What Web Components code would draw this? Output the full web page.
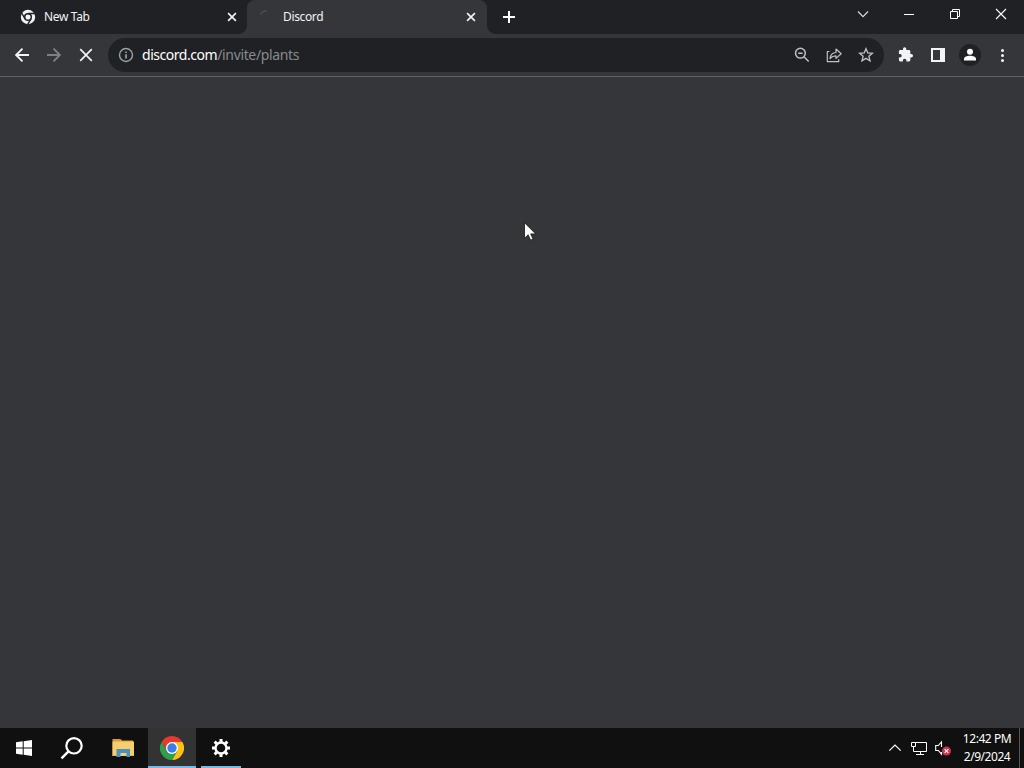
<!DOCTYPE html>
<html lang="en">
<head>
<meta charset="utf-8">
<title>Discord</title>
<style>
  html, body {
    margin: 0;
    height: 100%;
    overflow: hidden;
    background: #35363a;
    font-family: "Noto Sans", "Open Sans", sans-serif;
  }
</style>
</head>
<body>
<desktop-screen></desktop-screen>

<script>
const icons = {
  chromeMono: `<circle cx="8" cy="8" r="7.2" fill="#f1f3f4"/><circle cx="8" cy="8" r="3.3" fill="none" stroke="#202124" stroke-width="1.5"/><path d="M8 4.5h6.8M5 9.8 1.7 4M11 9.8 7.7 15.3" stroke="#202124" stroke-width="1.4"/>`,
  spinner: `<path d="M1.7 5.5a6.5 6.5 0 0 1 6-3.7" fill="none" stroke="#414c58" stroke-width="1.8"/>`,
  tabClose: `<path d="m4.1 4.1 7.8 7.8m0-7.8-7.8 7.8" stroke="#f1f3f4" stroke-width="1.6"/>`,
  plus: `<path d="M8 2v12M2 8h12" stroke="#fff" stroke-width="2"/>`,
  chevron: `<path d="m3 5.5 5 5.2 5-5.2" fill="none" stroke="#dedfe0" stroke-width="1.1"/>`,
  minimize: `<path d="M3 8.5h10" stroke="#fff"/>`,
  restore: `<path d="M3.5 5.5h7v7h-7zM5.5 5.5v-2h7v7h-2" fill="none" stroke="#fff"/>`,
  windowClose: `<path d="m3 3 10 10m0-10L3 13" stroke="#fff" stroke-width="1.1"/>`,
  back: `<path d="M15 8H2m6.5-6.4L2.1 8l6.4 6.4" fill="none" stroke="#f1f3f4" stroke-width="1.9"/>`,
  forward: `<path d="M1 8h13M7.5 1.6 13.9 8l-6.4 6.4" fill="none" stroke="#7e8083" stroke-width="1.9"/>`,
  stop: `<path d="m2.2 2.2 11.6 11.6m0-11.6L2.2 13.8" stroke="#f1f3f4" stroke-width="1.7"/>`,
  info: `<circle cx="8" cy="8" r="6.5" fill="none" stroke="#9aa0a6" stroke-width="1.4"/><path d="M8 7.2v4.2M8 4.5v1.6" stroke="#9aa0a6" stroke-width="1.7"/>`,
  zoomOut: `<circle cx="6.4" cy="6.2" r="4.9" fill="none" stroke="#bdc1c6" stroke-width="1.5"/><path d="m9.9 9.7 4.8 4.8M4.2 6.2h4.4" stroke="#bdc1c6" stroke-width="1.5"/>`,
  share: `<path d="M3.5 4.5H1.3v10.2h11.4v-2.5M4 11.5c.5-4 2.600-5.900 6-6V2l5.200 4.700L10 11.400V8.800c-2.800 0-4.500.9-6 2.700z" fill="none" stroke="#bdc1c6" stroke-width="1.2" stroke-linejoin="round"/>`,
  star: `<path d="m8 1.7 1.8 4.2 4.6.4-3.5 3 1.1 4.5L8 11.4l-4 2.4 1.1-4.5-3.5-3 4.6-.4z" fill="none" stroke="#bdc1c6" stroke-width="1.35"/>`,
  puzzle: `<path transform="translate(-.4 -.3) scale(.67)" d="M20.5 11H19V7c0-1.1-.9-2-2-2h-4V3.5a2.5 2.5 0 0 0-5 0V5H4c-1.1 0-2 .9-2 2v3.8h1.5a2.7 2.7 0 0 1 0 5.4H2V20c0 1.1.9 2 2 2h3.8v-1.5a2.7 2.7 0 0 1 5.4 0V22H17c1.1 0 2-.9 2-2v-4h1.5a2.5 2.5 0 0 0 0-5z" fill="#f1f3f4"/>`,
  sidePanel: `<path d="M1 1h14v14H1zM3 3v10h7V3z" fill="#f1f3f4" fill-rule="evenodd"/>`,
  profile: `<circle cx="12" cy="12" r="11" fill="#202124"/><circle cx="12" cy="8.8" r="3" fill="#fff"/><path d="M6 17.5V16c0-2 3-3.2 6-3.2s6 1.2 6 3.2v1.5z" fill="#fff"/>`,
  more: `<circle cx="8.5" cy="3.5" r="1.5" fill="#f1f3f4"/><circle cx="8.5" cy="8.5" r="1.5" fill="#f1f3f4"/><circle cx="8.5" cy="13.5" r="1.5" fill="#f1f3f4"/>`,
  windows: `<path d="m0 2.3 6.7-1v6.2H0zM7.7 1.2 16 0v7.5H7.7zM0 8.5h6.7v6.2L0 13.8zM7.7 8.5H16V16l-8.3-1.2z" fill="#fff"/>`,
  search: `<circle cx="14" cy="9.8" r="7.7" fill="none" stroke="#fff" stroke-width="2.2"/><path d="m8.5 15.3-7 7" stroke="#fff" stroke-width="2.4"/>`,
  folder: `<path d="M1.5 4V3h8L11 4.5h11V19H1.5z" fill="#d89b35"/><path d="M1.5 5.500H23V20H1.500z" fill="#f6cf6d"/><path d="M5.500 13H19v8h-3.500v-4h-6v4h-4z" fill="#4a91c2"/><path d="M1.500 19h4v1h-4zM19 19h4v1h-4z" fill="#e6b34d"/>`,
  chrome: `<path d="M12 0A12 12 0 0 1 22.4 6H12L6.8 15 1.6 6A12 12 0 0 1 12 0z" fill="#e33b2e"/><path d="M12 6h10.4A12 12 0 0 1 12 24l5.2-9z" fill="#fbc116"/><path d="m17.2 15-5.2 9A12 12 0 0 1 1.6 6l5.2 9 5.2 3z" fill="#2da04d"/><circle cx="12" cy="12" r="6" fill="#fff"/><circle cx="12" cy="12" r="4.7" fill="#3b7de9"/>`,
  gear: `<g stroke="#fff" fill="none"><circle cx="10" cy="10" r="5.5" stroke-width="2.4"/><path d="M10 1v3M10 16v3M1 10h3M16 10h3M3.640 3.640l2.100 2.100M14.260 14.260l2.100 2.100M3.640 16.360l2.100-2.100M14.260 5.740l2.100-2.100" stroke-width="3"/></g>`,
  caretUp: `<path d="m2.3 10.7 5.7-5.7 5.7 5.7" fill="none" stroke="#fff" stroke-width="1.2"/>`,
  network: `<path d="M4.5 2.5h11v9h-13v-5M9.500 11.500v3M5 14.500h8M.5 2.500h4v4h-4z" fill="none" stroke="#fff"/>`,
  muted: `<path d="M6.500 7V2L3.300 5.500H.7v5h2.600l3.200 3.700V12" fill="none" stroke="#fff" stroke-width="1.1"/><circle cx="11.500" cy="11" r="4.500" fill="#c9364a"/><path d="m9.700 9.200 3.600 3.600m0-3.600-3.600 3.600" stroke="#fff" stroke-width="1.2"/>`,
  cursor: `<path d="M.5.7v15.500l3.700-3.400 2.400 5.400 2.400-1.100-2.300-5.200h5z" fill="#fff" stroke="#151515" stroke-width=".8"/>`
};

// box of the drawing for the icons that are not on the 16px grid
const boxes = {
  profile: [24, 24],
  search: [24, 24],
  folder: [24, 24],
  chrome: [24, 24],
  gear: [20, 20],
  cursor: [13, 20]
};

class UiIcon extends HTMLElement {
  constructor() {
    super();
    this.attachShadow({ mode: 'open' });
  }

  connectedCallback() {
    const name = this.getAttribute('name');
    const [w, h] = boxes[name] || [16, 16];
    this.shadowRoot.innerHTML = `
      <style>
        :host { display: inline-flex; flex: none; align-items: center; justify-content: center; }
        svg { display: block; }
      </style>
      <svg width="${w}" height="${h}" viewBox="0 0 ${w} ${h}">${icons[name]}</svg>
    `;
  }
}
customElements.define('ui-icon', UiIcon);

// attach a shadow root with fixed markup
function defineElement(name, html) {
  const template = document.createElement('template');
  template.innerHTML = html;
  customElements.define(name, class extends HTMLElement {
    constructor() {
      super();
      this.attachShadow({ mode: 'open' }).appendChild(template.content.cloneNode(true));
    }
  });
}

defineElement('browser-tab', `
  <style>
    :host {
      display: flex;
      align-items: center;
      box-sizing: border-box;
      width: 239px;
      height: 34px;
      padding: 0 7px 0 12px;
      font-size: 12px;
      letter-spacing: -0.35px;
      color: #f1f3f4;
    }
    :host([active]) {
      position: relative;
      width: 240px;
      padding-right: 8px;
      border-radius: 8px 8px 0 0;
      background: #35363a;
    }
    :host([active])::before,
    :host([active])::after {
      content: "";
      position: absolute;
      bottom: 0;
      width: 8px;
      height: 8px;
    }
    :host([active])::before {
      left: -8px;
      background: radial-gradient(circle at 0 0, transparent 7.5px, #35363a 8px);
    }
    :host([active])::after {
      right: -8px;
      background: radial-gradient(circle at 100% 0, transparent 7.5px, #35363a 8px);
    }
    .title { flex: 1; margin-left: 8px; padding-bottom: 1px; white-space: nowrap; }
  </style>
  <slot name="icon"></slot>
  <span class="title"><slot></slot></span>
  <ui-icon name="tabClose"></ui-icon>
`);

defineElement('tab-strip', `
  <style>
    :host { display: flex; height: 34px; padding-left: 8px; background: #202124; }
    .new { width: 44px; }
    .controls { display: flex; height: 28px; margin-left: auto; }
    .controls ui-icon { width: 46px; }
  </style>
  <slot></slot>
  <ui-icon class="new" name="plus"></ui-icon>
  <div class="controls">
    <ui-icon name="chevron"></ui-icon>
    <ui-icon name="minimize"></ui-icon>
    <ui-icon name="restore"></ui-icon>
    <ui-icon name="windowClose"></ui-icon>
  </div>
`);

defineElement('address-bar', `
  <style>
    :host {
      display: flex;
      flex: 1;
      align-items: center;
      height: 34px;
      padding: 0 2px 0 10px;
      border-radius: 17px;
      background: #202124;
      color: #888b8f;
      font-size: 14px;
      letter-spacing: -0.35px;
    }
    .url { flex: 1; margin-left: 8px; padding-bottom: 1px; white-space: nowrap; }
    .action { width: 32px; }
  </style>
  <ui-icon name="info"></ui-icon>
  <span class="url"><slot></slot></span>
  <ui-icon class="action" name="zoomOut"></ui-icon>
  <ui-icon class="action" name="share"></ui-icon>
  <ui-icon class="action" name="star"></ui-icon>
`);

defineElement('browser-toolbar', `
  <style>
    :host {
      display: flex;
      align-items: center;
      box-sizing: border-box;
      height: 43px;
      padding: 0 6px;
      border-bottom: 1px solid #606164;
      background: #35363a;
    }
    ui-icon { width: 32px; }
    address-bar { margin: 0 6px; }
    ::slotted(b) { font-weight: 400; letter-spacing: -0.46px; color: #fff; }
  </style>
  <ui-icon name="back"></ui-icon>
  <ui-icon name="forward"></ui-icon>
  <ui-icon name="stop"></ui-icon>
  <address-bar><slot></slot></address-bar>
  <ui-icon name="puzzle"></ui-icon>
  <ui-icon name="sidePanel"></ui-icon>
  <ui-icon name="profile"></ui-icon>
  <ui-icon name="more"></ui-icon>
`);

defineElement('task-button', `
  <style>
    :host {
      display: flex;
      align-items: center;
      justify-content: center;
      position: relative;
      width: 48px;
      height: 40px;
    }
    :host([active]) { background: #333334; }
    :host([running])::after {
      content: "";
      position: absolute;
      bottom: 0;
      left: 4px;
      right: 4px;
      height: 2px;
      background: #76b9ed;
    }
    :host([active])::after { left: 0; right: 0; }
  </style>
  <slot></slot>
`);

defineElement('task-bar', `
  <style>
    :host { display: flex; height: 40px; background: #101010; color: #fff; }
    .apps { display: flex; gap: 1px; margin-left: 3px; }
    .tray { display: flex; align-items: center; margin-left: auto; }
    .tray ui-icon { width: 24px; }
    .clock {
      width: 64px;
      font-size: 12px;
      line-height: 18px;
      letter-spacing: -0.45px;
      text-align: center;
      white-space: nowrap;
    }
    .peek { width: 4px; height: 40px; border-left: 1px solid #555; }
  </style>
  <task-button><ui-icon name="windows"></ui-icon></task-button>
  <task-button><ui-icon name="search"></ui-icon></task-button>
  <div class="apps">
    <task-button><ui-icon name="folder"></ui-icon></task-button>
    <task-button active running><ui-icon name="chrome"></ui-icon></task-button>
    <task-button running><ui-icon name="gear"></ui-icon></task-button>
  </div>
  <div class="tray">
    <ui-icon name="caretUp"></ui-icon>
    <ui-icon name="network"></ui-icon>
    <ui-icon name="muted"></ui-icon>
    <div class="clock"><div>12:42 PM</div><div>2/9/2024</div></div>
    <div class="peek"></div>
  </div>
`);

defineElement('desktop-screen', `
  <style>
    :host { display: flex; flex-direction: column; width: 100%; height: 100vh; }
    main { flex: 1; background: #35363a; }
    .pointer { position: absolute; left: 524px; top: 222px; }
  </style>
  <tab-strip>
    <browser-tab><ui-icon slot="icon" name="chromeMono"></ui-icon>New Tab</browser-tab>
    <browser-tab active><ui-icon slot="icon" name="spinner"></ui-icon>Discord</browser-tab>
  </tab-strip>
  <browser-toolbar><b>discord.com</b>/invite/plants</browser-toolbar>
  <main></main>
  <task-bar></task-bar>
  <ui-icon class="pointer" name="cursor"></ui-icon>
`);
</script>
</body>
</html>
